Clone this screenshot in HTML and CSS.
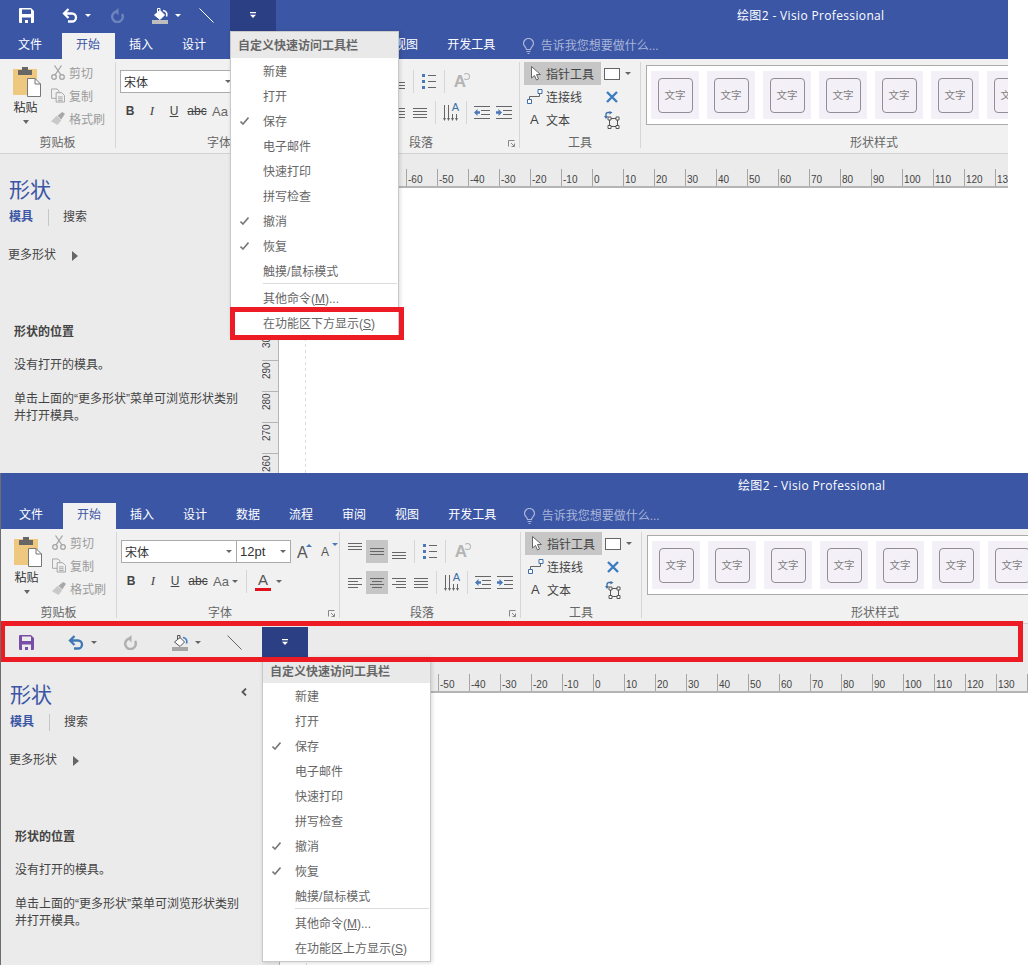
FILE: index.html
```html
<!DOCTYPE html>
<html lang="zh-CN">
<head>
    <meta charset="UTF-8">
    <title>绘图2 - Visio Professional</title>
    <link rel="stylesheet" href="styles.css">
</head>
<body>
    <svg class="icon-defs" aria-hidden="true">
        <symbol id="i-save" viewBox="0 0 15 15"><path fill="currentColor" fill-rule="evenodd" d="M0 1a1 1 0 0 1 1-1h11l3 3v11a1 1 0 0 1-1 1H1a1 1 0 0 1-1-1zM3 1.500V6h9V1.500zM3 9.500V15h3v-3h3v3h3V9.500z"/></symbol>
        <symbol id="i-undo" viewBox="0 0 16 15"><path fill="none" stroke="currentColor" stroke-width="2.300" d="M2 5.500h8a4 4 0 0 1 0 8H6M6.500 1L2 5.500 6.500 10"/></symbol>
        <symbol id="i-redo" viewBox="0 0 14 15"><path fill="none" stroke="currentColor" stroke-width="2.500" d="M7 3.500A5.300 5.300 0 1 0 12 6"/><path fill="currentColor" d="M8.500 0v7.500L4.500 3.500z"/></symbol>
        <symbol id="i-fill" viewBox="0 0 16 16"><path fill="currentColor" d="M0 12h16v4H0z"/><path fill="#fff" stroke="var(--bucket-line)" d="M2.500 7L8 2.500 12.500 7 8 11.500z"/><path fill="none" stroke="var(--bucket-line)" d="M5.500 4.500V.5h2.500v3"/><path fill="none" stroke="var(--bucket-drop)" stroke-width="1.600" d="M11 2.500c3 .5 4.500 2.500 3.500 6"/></symbol>
        <symbol id="i-line" viewBox="0 0 15 15"><path fill="none" stroke="currentColor" d="M.5.5l14 14"/></symbol>
        <symbol id="i-more" viewBox="0 0 7 8"><path fill="currentColor" d="M0 0h7v1.300H0zM0 3h7L3.500 7z"/></symbol>
        <symbol id="i-paste" viewBox="0 0 28 30"><path fill="#edc87e" d="M0 2h24v26H0z"/><path fill="#666" d="M5 3h4V0h6v3h4v5H5z"/><path fill="#fff" stroke="#777" d="M14.500 11.500h7.500l5.500 5.500v12.500h-13z"/><path fill="none" stroke="#777" d="M22 11.500V17h5.500"/></symbol>
        <symbol id="i-cut" viewBox="0 0 14 15"><g fill="none" stroke="#a3a3a3" stroke-width="1.300"><circle cx="3" cy="12" r="2.300"/><circle cx="11" cy="12" r="2.300"/><path d="M4 10L10.500.5M10 10L3.500.5"/></g></symbol>
        <symbol id="i-copy" viewBox="0 0 15 15"><g fill="#f1f1f1" stroke="#a3a3a3"><path d="M.5.5h6l2 2v8h-8z"/><path d="M5.500 4.500h6l3 3v7h-9z"/><path d="M7.500 9h5M7.500 11h5M7.500 13h5"/></g></symbol>
        <symbol id="i-brush" viewBox="0 0 15 14"><path fill="#c9c9c9" d="M0 10l6-6 5 5-4 5z"/><path fill="#a8a8a8" d="M7 4l5-4 3 2-4 6z"/></symbol>
        <symbol id="i-top" viewBox="0 0 14 7"><path fill="none" stroke="#666" d="M0 .5h14M0 3.500h14M0 6.500h14"/></symbol>
        <symbol id="i-left" viewBox="0 0 14 10"><path fill="none" stroke="#666" d="M0 .5h14M0 3.500h10M0 6.500h14M0 9.500h10"/></symbol>
        <symbol id="i-center" viewBox="0 0 14 10"><path fill="none" stroke="#666" d="M0 .5h14M2 3.500h10M0 6.500h14M2 9.500h10"/></symbol>
        <symbol id="i-right" viewBox="0 0 14 10"><path fill="none" stroke="#666" d="M0 .5h14M4 3.500h10M0 6.500h14M4 9.500h10"/></symbol>
        <symbol id="i-justify" viewBox="0 0 14 10"><path fill="none" stroke="#666" d="M0 .5h14M0 3.500h14M0 6.500h14M0 9.500h14"/></symbol>
        <symbol id="i-bullets" viewBox="0 0 14 15"><path fill="#4a7ab5" d="M0 0h3v3H0zM0 6h3v3H0zM0 12h3v3H0z"/><path fill="none" stroke="#666" d="M6 1.500h8M6 7.500h8M6 13.500h8"/></symbol>
        <symbol id="i-textdir" viewBox="0 0 16 17"><path fill="none" stroke="#666" d="M1.500 1v14M5.500 1v14M9.500 10v5M13.500 10v5"/><path fill="#666" d="M0 14h3l-1.500 3zM4 14h3l-1.500 3zM8 14h3l-1.500 3zM12 14h3l-1.500 3z"/></symbol>
        <symbol id="i-outdent" viewBox="0 0 16 13"><path fill="none" stroke="#666" d="M0 .5h16M7 4.500h9M7 8.500h9M0 12.500h16"/><path fill="#4a7ab5" d="M0 6.500l3.500-3.500v2.300H6v2.400H3.500V10z"/></symbol>
        <symbol id="i-indent" viewBox="0 0 16 13"><path fill="none" stroke="#666" d="M0 .5h16M7 4.500h9M7 8.500h9M0 12.500h16"/><path fill="#4a7ab5" d="M6 6.500L2.500 3v2.300H0v2.400h2.500V10z"/></symbol>
        <symbol id="i-pointer" viewBox="0 0 10 15"><path fill="#fff" stroke="#666" d="M.5.5v11.500l3-2.500 2 4.500 2-1-2-4.500h4z"/></symbol>
        <symbol id="i-connector" viewBox="0 0 16 15"><path fill="none" stroke="#666" d="M2.500 10V7.500h10V4"/><path fill="#fff" stroke="#3d6fa8" d="M.5 10.500h4v4h-4zM11 .5h4v4h-4z"/></symbol>
        <symbol id="i-close" viewBox="0 0 12 12"><path fill="none" stroke="#3d7cc0" stroke-width="2.400" d="M1 1l10 10M11 1L1 11"/></symbol>
        <symbol id="i-transform" viewBox="0 0 16 18"><path fill="none" stroke="#555" d="M5.500 7.500h8v8h-8z"/><path fill="#fff" stroke="#555" d="M4 6h3v3H4zM12 6h3v3h-3zM4 14.500h3v3H4zM12 14.500h3v3h-3z"/><path fill="none" stroke="#3d6fa8" stroke-width="1.400" d="M2 5V3.500a2 2 0 0 1 2-2h2"/><path fill="#3d6fa8" d="M0 5h4L2 8zM5.500 0v3.500L8.500 1.500z"/></symbol>
        <symbol id="i-launcher" viewBox="0 0 7 7"><path fill="none" stroke="#888" d="M.5 6.500V.5h6M3 3l3.500 3.500M3.500 6.500h3v-3"/></symbol>
        <symbol id="i-bulb" viewBox="0 0 11 16"><path fill="none" stroke="#a9b5d8" stroke-width="1.200" d="M3.500 11.500c0-2-3-3.500-3-6a5 5 0 0 1 10 0c0 2.500-3 4-3 6zM3.500 13.500h4M4.500 15.500h2"/></symbol>
        <symbol id="i-check" viewBox="0 0 9 8"><path fill="none" stroke="#777" stroke-width="1.600" d="M.5 4.500l2.500 2.500 5.500-6.500"/></symbol>
        <symbol id="i-chevron" viewBox="0 0 6 8"><path fill="none" stroke="#555" stroke-width="1.800" d="M5 .5L1.500 4 5 7.500"/></symbol>
    </svg>

    <!-- shot 1: toolbar above the ribbon -->
    <div class="shot shot-top">
        <div class="titlebar">
            <div class="qat">
                <div class="qat-btn"><svg class="qi-save"><use href="#i-save"/></svg></div>
                <div class="qat-btn qat-split"><svg class="qi-undo"><use href="#i-undo"/></svg><span class="caret"></span></div>
                <div class="qat-btn"><svg class="qi-redo"><use href="#i-redo"/></svg></div>
                <div class="qat-btn qat-split"><svg class="qi-fill"><use href="#i-fill"/></svg><span class="caret"></span></div>
                <div class="qat-btn"><svg class="qi-line"><use href="#i-line"/></svg></div>
                <div class="qat-more"><svg class="qi-more"><use href="#i-more"/></svg></div>
            </div>
            <div class="doc-title">绘图2 - Visio Professional</div>
        </div>
        <div class="tabs">
            <div class="tab tab-file">文件</div>
            <div class="tab tab-active">开始</div>
            <div class="tab">插入</div>
            <div class="tab">设计</div>
            <div class="tab">数据</div>
            <div class="tab">流程</div>
            <div class="tab">审阅</div>
            <div class="tab">视图</div>
            <div class="tab">开发工具</div>
            <div class="tell-me"><svg class="bulb"><use href="#i-bulb"/></svg>告诉我您想要做什么...</div>
        </div>
        <div class="ribbon">
            <div class="group group-clip">
                <div class="group-body clip-body">
                    <div class="paste"><svg class="paste-icon"><use href="#i-paste"/></svg><span class="paste-text">粘贴</span><span class="caret"></span></div>
                    <div class="clip-list">
                        <div class="clip-row"><svg class="clip-icon"><use href="#i-cut"/></svg>剪切</div>
                        <div class="clip-row"><svg class="clip-icon"><use href="#i-copy"/></svg>复制</div>
                        <div class="clip-row"><svg class="clip-icon"><use href="#i-brush"/></svg>格式刷</div>
                    </div>
                </div>
                <div class="group-label">剪贴板</div>
            </div>
            <div class="group group-font">
                <div class="group-body font-body">
                    <div class="font-row">
                        <div class="combo combo-name"><span>宋体</span><span class="caret"></span></div>
                        <div class="combo combo-size"><span>12pt</span><span class="caret"></span></div>
                        <div class="size-btn size-grow">A<i class="tri-up"></i></div>
                        <div class="size-btn size-shrink">A<i class="tri-down"></i></div>
                    </div>
                    <div class="font-row font-row-b">
                        <div class="f-btn f-b">B</div>
                        <div class="f-btn f-i">I</div>
                        <div class="f-btn f-u">U</div>
                        <div class="f-btn f-s">abc</div>
                        <div class="f-btn f-aa">Aa<span class="caret"></span></div>
                        <div class="vsep vsep-font"></div>
                        <div class="f-btn f-color"><span class="f-color-a">A</span><span class="caret"></span></div>
                    </div>
                </div>
                <div class="group-label label-launch">字体<svg class="launcher"><use href="#i-launcher"/></svg></div>
            </div>
            <div class="group group-para">
                <div class="group-body para-body">
                    <div class="para-row">
                        <div class="p-btn p-top"><svg class="p-icon"><use href="#i-top"/></svg></div>
                        <div class="p-btn p-on"><svg class="p-icon"><use href="#i-top"/></svg></div>
                        <div class="p-btn p-bottom"><svg class="p-icon"><use href="#i-top"/></svg></div>
                        <div class="vsep"></div>
                        <div class="p-btn"><svg class="p-icon-b"><use href="#i-bullets"/></svg></div>
                        <div class="vsep"></div>
                        <div class="p-btn p-rotate">A<i class="rotate-mark"></i></div>
                    </div>
                    <div class="para-row">
                        <div class="p-btn"><svg class="p-icon-a"><use href="#i-left"/></svg></div>
                        <div class="p-btn p-on"><svg class="p-icon-a"><use href="#i-center"/></svg></div>
                        <div class="p-btn"><svg class="p-icon-a"><use href="#i-right"/></svg></div>
                        <div class="p-btn"><svg class="p-icon-a"><use href="#i-justify"/></svg></div>
                        <div class="vsep"></div>
                        <div class="p-btn p-dir"><svg class="p-icon-d"><use href="#i-textdir"/></svg><span class="p-dir-a">A</span></div>
                        <div class="vsep"></div>
                        <div class="p-btn"><svg class="p-icon-i"><use href="#i-outdent"/></svg></div>
                        <div class="p-btn"><svg class="p-icon-i"><use href="#i-indent"/></svg></div>
                    </div>
                </div>
                <div class="group-label label-launch">段落<svg class="launcher"><use href="#i-launcher"/></svg></div>
            </div>
            <div class="group group-tools">
                <div class="group-body tools-body">
                    <div class="tool tool-on"><svg class="tool-pointer"><use href="#i-pointer"/></svg>指针工具</div>
                    <div class="tool-side"><span class="tool-rect"></span><span class="caret"></span></div>
                    <div class="tool"><svg class="tool-conn"><use href="#i-connector"/></svg>连接线</div>
                    <div class="tool-side"><svg class="tool-x"><use href="#i-close"/></svg></div>
                    <div class="tool"><span class="tool-a">A</span>文本</div>
                    <div class="tool-side"><svg class="tool-tf"><use href="#i-transform"/></svg></div>
                </div>
                <div class="group-label">工具</div>
            </div>
            <div class="group group-gallery">
                <div class="group-body">
                    <div class="gallery">
                        <div class="swatch"><span class="swatch-box">文字</span></div>
                        <div class="swatch"><span class="swatch-box">文字</span></div>
                        <div class="swatch"><span class="swatch-box">文字</span></div>
                        <div class="swatch"><span class="swatch-box">文字</span></div>
                        <div class="swatch"><span class="swatch-box">文字</span></div>
                        <div class="swatch"><span class="swatch-box">文字</span></div>
                        <div class="swatch"><span class="swatch-box">文字</span></div>
                    </div>
                </div>
                <div class="group-label">形状样式</div>
            </div>
        </div>
        <div class="workspace">
            <div class="panel">
                <div class="panel-head"><span class="panel-title">形状</span><svg class="collapse"><use href="#i-chevron"/></svg></div>
                <div class="panel-tabs"><span class="panel-tab-on">模具</span><span class="panel-tab">搜索</span></div>
                <div class="more-shapes">更多形状<span class="tri-right"></span></div>
                <div class="hint-title">形状的位置</div>
                <div class="hint-line">没有打开的模具。</div>
                <div class="hint-text">单击上面的“更多形状”菜单可浏览形状类别并打开模具。</div>
            </div>
            <div class="vruler">
                <span class="vtick"><b>340</b></span><span class="vtick"><b>330</b></span><span class="vtick"><b>320</b></span><span class="vtick"><b>310</b></span><span class="vtick"><b>300</b></span><span class="vtick"><b>290</b></span><span class="vtick"><b>280</b></span><span class="vtick"><b>270</b></span><span class="vtick"><b>260</b></span>
            </div>
            <div class="canvas">
                <div class="hruler">
                    <span class="tick">-90</span><span class="tick">-80</span><span class="tick">-70</span><span class="tick">-60</span><span class="tick">-50</span><span class="tick">-40</span><span class="tick">-30</span><span class="tick">-20</span><span class="tick">-10</span><span class="tick">0</span><span class="tick">10</span><span class="tick">20</span><span class="tick">30</span><span class="tick">40</span><span class="tick">50</span><span class="tick">60</span><span class="tick">70</span><span class="tick">80</span><span class="tick">90</span><span class="tick">100</span><span class="tick">110</span><span class="tick">120</span><span class="tick">130</span><span class="tick">140</span>
                </div>
                <div class="page"></div>
            </div>
        </div>

        <div class="qat-menu">
            <div class="menu-head">自定义快速访问工具栏</div>
            <div class="menu-item">新建</div>
            <div class="menu-item">打开</div>
            <div class="menu-item menu-checked"><svg class="check"><use href="#i-check"/></svg>保存</div>
            <div class="menu-item">电子邮件</div>
            <div class="menu-item">快速打印</div>
            <div class="menu-item">拼写检查</div>
            <div class="menu-item menu-checked"><svg class="check"><use href="#i-check"/></svg>撤消</div>
            <div class="menu-item menu-checked"><svg class="check"><use href="#i-check"/></svg>恢复</div>
            <div class="menu-item">触摸/鼠标模式</div>
            <div class="menu-sep"></div>
            <div class="menu-item">其他命令(<u>M</u>)...</div>
            <div class="menu-item">在功能区下方显示(<u>S</u>)</div>
        </div>
        <div class="mark mark-item"></div>
    </div>

    <!-- shot 2: toolbar below the ribbon -->
    <div class="shot shot-bottom">
        <div class="titlebar">
            <div class="doc-title">绘图2 - Visio Professional</div>
        </div>
        <div class="tabs">
            <div class="tab tab-file">文件</div>
            <div class="tab tab-active">开始</div>
            <div class="tab">插入</div>
            <div class="tab">设计</div>
            <div class="tab">数据</div>
            <div class="tab">流程</div>
            <div class="tab">审阅</div>
            <div class="tab">视图</div>
            <div class="tab">开发工具</div>
            <div class="tell-me"><svg class="bulb"><use href="#i-bulb"/></svg>告诉我您想要做什么...</div>
        </div>
        <div class="ribbon">
            <div class="group group-clip">
                <div class="group-body clip-body">
                    <div class="paste"><svg class="paste-icon"><use href="#i-paste"/></svg><span class="paste-text">粘贴</span><span class="caret"></span></div>
                    <div class="clip-list">
                        <div class="clip-row"><svg class="clip-icon"><use href="#i-cut"/></svg>剪切</div>
                        <div class="clip-row"><svg class="clip-icon"><use href="#i-copy"/></svg>复制</div>
                        <div class="clip-row"><svg class="clip-icon"><use href="#i-brush"/></svg>格式刷</div>
                    </div>
                </div>
                <div class="group-label">剪贴板</div>
            </div>
            <div class="group group-font">
                <div class="group-body font-body">
                    <div class="font-row">
                        <div class="combo combo-name"><span>宋体</span><span class="caret"></span></div>
                        <div class="combo combo-size"><span>12pt</span><span class="caret"></span></div>
                        <div class="size-btn size-grow">A<i class="tri-up"></i></div>
                        <div class="size-btn size-shrink">A<i class="tri-down"></i></div>
                    </div>
                    <div class="font-row font-row-b">
                        <div class="f-btn f-b">B</div>
                        <div class="f-btn f-i">I</div>
                        <div class="f-btn f-u">U</div>
                        <div class="f-btn f-s">abc</div>
                        <div class="f-btn f-aa">Aa<span class="caret"></span></div>
                        <div class="vsep vsep-font"></div>
                        <div class="f-btn f-color"><span class="f-color-a">A</span><span class="caret"></span></div>
                    </div>
                </div>
                <div class="group-label label-launch">字体<svg class="launcher"><use href="#i-launcher"/></svg></div>
            </div>
            <div class="group group-para">
                <div class="group-body para-body">
                    <div class="para-row">
                        <div class="p-btn p-top"><svg class="p-icon"><use href="#i-top"/></svg></div>
                        <div class="p-btn p-on"><svg class="p-icon"><use href="#i-top"/></svg></div>
                        <div class="p-btn p-bottom"><svg class="p-icon"><use href="#i-top"/></svg></div>
                        <div class="vsep"></div>
                        <div class="p-btn"><svg class="p-icon-b"><use href="#i-bullets"/></svg></div>
                        <div class="vsep"></div>
                        <div class="p-btn p-rotate">A<i class="rotate-mark"></i></div>
                    </div>
                    <div class="para-row">
                        <div class="p-btn"><svg class="p-icon-a"><use href="#i-left"/></svg></div>
                        <div class="p-btn p-on"><svg class="p-icon-a"><use href="#i-center"/></svg></div>
                        <div class="p-btn"><svg class="p-icon-a"><use href="#i-right"/></svg></div>
                        <div class="p-btn"><svg class="p-icon-a"><use href="#i-justify"/></svg></div>
                        <div class="vsep"></div>
                        <div class="p-btn p-dir"><svg class="p-icon-d"><use href="#i-textdir"/></svg><span class="p-dir-a">A</span></div>
                        <div class="vsep"></div>
                        <div class="p-btn"><svg class="p-icon-i"><use href="#i-outdent"/></svg></div>
                        <div class="p-btn"><svg class="p-icon-i"><use href="#i-indent"/></svg></div>
                    </div>
                </div>
                <div class="group-label label-launch">段落<svg class="launcher"><use href="#i-launcher"/></svg></div>
            </div>
            <div class="group group-tools">
                <div class="group-body tools-body">
                    <div class="tool tool-on"><svg class="tool-pointer"><use href="#i-pointer"/></svg>指针工具</div>
                    <div class="tool-side"><span class="tool-rect"></span><span class="caret"></span></div>
                    <div class="tool"><svg class="tool-conn"><use href="#i-connector"/></svg>连接线</div>
                    <div class="tool-side"><svg class="tool-x"><use href="#i-close"/></svg></div>
                    <div class="tool"><span class="tool-a">A</span>文本</div>
                    <div class="tool-side"><svg class="tool-tf"><use href="#i-transform"/></svg></div>
                </div>
                <div class="group-label">工具</div>
            </div>
            <div class="group group-gallery">
                <div class="group-body">
                    <div class="gallery">
                        <div class="swatch"><span class="swatch-box">文字</span></div>
                        <div class="swatch"><span class="swatch-box">文字</span></div>
                        <div class="swatch"><span class="swatch-box">文字</span></div>
                        <div class="swatch"><span class="swatch-box">文字</span></div>
                        <div class="swatch"><span class="swatch-box">文字</span></div>
                        <div class="swatch"><span class="swatch-box">文字</span></div>
                        <div class="swatch"><span class="swatch-box">文字</span></div>
                    </div>
                </div>
                <div class="group-label">形状样式</div>
            </div>
        </div>
        <div class="qat-bar">
            <div class="qat">
                <div class="qat-btn"><svg class="qi-save"><use href="#i-save"/></svg></div>
                <div class="qat-btn qat-split"><svg class="qi-undo"><use href="#i-undo"/></svg><span class="caret"></span></div>
                <div class="qat-btn"><svg class="qi-redo"><use href="#i-redo"/></svg></div>
                <div class="qat-btn qat-split"><svg class="qi-fill"><use href="#i-fill"/></svg><span class="caret"></span></div>
                <div class="qat-btn"><svg class="qi-line"><use href="#i-line"/></svg></div>
                <div class="qat-more"><svg class="qi-more"><use href="#i-more"/></svg></div>
            </div>
        </div>
        <div class="workspace">
            <div class="panel">
                <div class="panel-head"><span class="panel-title">形状</span><svg class="collapse"><use href="#i-chevron"/></svg></div>
                <div class="panel-tabs"><span class="panel-tab-on">模具</span><span class="panel-tab">搜索</span></div>
                <div class="more-shapes">更多形状<span class="tri-right"></span></div>
                <div class="hint-title">形状的位置</div>
                <div class="hint-line">没有打开的模具。</div>
                <div class="hint-text">单击上面的“更多形状”菜单可浏览形状类别并打开模具。</div>
            </div>
            <div class="vruler"></div>
            <div class="canvas">
                <div class="hruler">
                    <span class="tick">-90</span><span class="tick">-80</span><span class="tick">-70</span><span class="tick">-60</span><span class="tick">-50</span><span class="tick">-40</span><span class="tick">-30</span><span class="tick">-20</span><span class="tick">-10</span><span class="tick">0</span><span class="tick">10</span><span class="tick">20</span><span class="tick">30</span><span class="tick">40</span><span class="tick">50</span><span class="tick">60</span><span class="tick">70</span><span class="tick">80</span><span class="tick">90</span><span class="tick">100</span><span class="tick">110</span><span class="tick">120</span><span class="tick">130</span><span class="tick">140</span>
                </div>
                <div class="page"></div>
            </div>
        </div>

        <div class="qat-menu">
            <div class="menu-head">自定义快速访问工具栏</div>
            <div class="menu-item">新建</div>
            <div class="menu-item">打开</div>
            <div class="menu-item menu-checked"><svg class="check"><use href="#i-check"/></svg>保存</div>
            <div class="menu-item">电子邮件</div>
            <div class="menu-item">快速打印</div>
            <div class="menu-item">拼写检查</div>
            <div class="menu-item menu-checked"><svg class="check"><use href="#i-check"/></svg>撤消</div>
            <div class="menu-item menu-checked"><svg class="check"><use href="#i-check"/></svg>恢复</div>
            <div class="menu-item">触摸/鼠标模式</div>
            <div class="menu-sep"></div>
            <div class="menu-item">其他命令(<u>M</u>)...</div>
            <div class="menu-item">在功能区上方显示(<u>S</u>)</div>
        </div>
        <div class="mark mark-bar"></div>
    </div>
</body>
</html>
```

FILE: styles.css
```css
* {
    box-sizing: border-box;
}

html, body {
    margin: 0;
    padding: 0;
    background-color: #fff;
}

body {
    width: 1028px;
    height: 965px;
    overflow: hidden;
    font-family: "Liberation Sans", "Noto Sans CJK SC", sans-serif;
    font-size: 12px;
    color: #444;
}

svg {
    display: block;
    flex: none;
}

.icon-defs {
    position: absolute;
    width: 0;
    height: 0;
}

.caret {
    display: block;
    flex: none;
    width: 0;
    height: 0;
    border-left: 3px solid transparent;
    border-right: 3px solid transparent;
    border-top: 3px solid #666;
}

/* the two stacked window captures */
.shot {
    position: relative;
    overflow: hidden;
}

.shot-top {
    width: 1008px;
    height: 473px;
}

.shot-bottom {
    width: 1028px;
    height: 492px;
    border-left: 1px solid #6d6d6d;
}

/* title bar */
.titlebar {
    display: flex;
    background-color: #3b56a5;
    color: #fff;
}

.shot-top .titlebar {
    height: 33px;
}

.shot-bottom .titlebar {
    height: 30px;
}

.doc-title {
    font-family: "Open Sans", "Noto Sans CJK SC", sans-serif;
    font-size: 12px;
    letter-spacing: 0.35px;
    white-space: nowrap;
}

.shot-top .doc-title {
    margin-left: 461px;
    line-height: 32px;
}

.shot-bottom .doc-title {
    margin-left: 737px;
    line-height: 26px;
}

/* quick access toolbar */
.qat {
    display: flex;
    height: 31px;
}

.qat-btn {
    display: flex;
    align-items: center;
    justify-content: center;
    flex: none;
}

.qat-split {
    justify-content: flex-start;
}

.qat-more {
    display: flex;
    align-items: center;
    justify-content: center;
    width: 46px;
    height: 31px;
    background-color: #2b3f84;
}

.shot-top .qat {
    padding-left: 5px;
    color: #fff;
    --bucket-line: #fff;
    --bucket-drop: #fff;
}

.shot-top .qat-btn {
    width: 43px;
}

.shot-top .qat-split {
    width: 47px;
    padding-left: 14px;
    gap: 7px;
}

.shot-top .qat-more {
    margin-left: 2px;
}

.shot-top .qat .caret {
    border-top-color: #fff;
}

.shot-top .qi-redo {
    color: #6d83bd;
}

.shot-top .qi-fill {
    color: #bdbdbd;
}

.shot-bottom .qat-btn {
    width: 50px;
}

.shot-bottom .qat-split {
    width: 54px;
    padding-left: 17px;
    gap: 7px;
}

.shot-bottom .qat-more {
    margin-left: 3px;
}

.qi-save {
    width: 15px;
    height: 15px;
}

.qi-undo {
    width: 16px;
    height: 15px;
}

.qi-redo {
    width: 14px;
    height: 15px;
}

.qi-fill {
    width: 16px;
    height: 16px;
}

.qi-line {
    width: 15px;
    height: 15px;
}

.qi-more {
    width: 6px;
    height: 7px;
    color: #fff;
}

.qat-bar {
    height: 35px;
    padding-top: 3px;
    background-color: #ebebeb;
    --bucket-line: #555;
    --bucket-drop: #3d7cc0;
}

.qat-bar .qi-save {
    color: #7a4ea6;
}

.qat-bar .qi-undo {
    color: #3d78b4;
}

.qat-bar .qi-redo {
    color: #b0b0b0;
}

.qat-bar .qi-fill {
    color: #a6a6a6;
}

.qat-bar .qi-line {
    color: #666;
}

/* ribbon tabs */
.tabs {
    display: flex;
    height: 26px;
    background-color: #3b56a5;
    color: #fff;
    padding-left: 3.500px;
    line-height: 25px;
}

.tab {
    padding: 0 14.500px;
    white-space: nowrap;
}

.tab-file {
    margin-right: 5px;
}

.tab-active {
    background-color: #f1f1f1;
    color: #3b56a5;
}

.tell-me {
    display: flex;
    align-items: center;
    margin-left: 13px;
    color: #a9b5d8;
    white-space: nowrap;
}

.bulb {
    width: 11px;
    height: 16px;
    margin-right: 7px;
}

/* ribbon */
.ribbon {
    display: flex;
    height: 95px;
    padding-top: 3px;
    background-color: #f1f1f1;
    border-bottom: 1px solid #d2d2d2;
    overflow: hidden;
}

.group {
    display: flex;
    flex: none;
    flex-direction: column;
    height: 86px;
    border-right: 1px solid #d6d6d6;
}

.group-body {
    flex: none;
    height: 73px;
}

.group-label {
    position: relative;
    flex: none;
    height: 16px;
    line-height: 16px;
    text-align: center;
    color: #666;
    white-space: nowrap;
}

.label-launch {
    padding-right: 16px;
}

.launcher {
    position: absolute;
    right: 4px;
    top: 5px;
    width: 7px;
    height: 7px;
}

.group-clip {
    width: 116px;
}

.clip-body {
    display: flex;
    padding-left: 13px;
}

.paste {
    display: flex;
    flex-direction: column;
    align-items: center;
    width: 28px;
    padding-top: 5px;
}

.paste-icon {
    width: 28px;
    height: 30px;
}

.paste-text {
    margin: 1px 3px 0 0;
    line-height: 20px;
    color: #333;
}

.paste .caret {
    margin: 2px 2px 0 0;
    border-top-width: 4px;
}

.clip-list {
    margin: -1px 0 0 10px;
    color: #9b9b9b;
}

.clip-row {
    display: flex;
    align-items: center;
    height: 23px;
    white-space: nowrap;
}

.clip-icon {
    width: 14px;
    height: 15px;
    margin-right: 4px;
}

.group-font {
    width: 223px;
}

.font-body {
    padding: 8px 0 0 4px;
}

.font-row {
    display: flex;
    align-items: center;
    height: 23px;
}

.font-row-b {
    height: 22px;
    margin: 7px 0 0 -1px;
}

.combo {
    display: flex;
    align-items: center;
    justify-content: space-between;
    height: 23px;
    padding: 0 4px 0 3px;
    border: 1px solid #ababab;
    background-color: #fff;
    color: #333;
}

.combo-name {
    width: 116px;
}

.combo-size {
    width: 55px;
    margin-left: -1px;
    font-size: 13px;
}

.size-btn {
    position: relative;
    width: 24px;
    padding: 1px 0 0 6px;
    font-size: 16px;
    line-height: 21px;
    color: #555;
}

.size-shrink {
    padding: 2px 0 0 6px;
    font-size: 12px;
}

.tri-up, .tri-down {
    position: absolute;
    top: 3px;
    width: 0;
    height: 0;
    border-left: 3px solid transparent;
    border-right: 3px solid transparent;
}

.tri-up {
    right: 3px;
    border-bottom: 3px solid #4a7ab5;
}

.tri-down {
    right: 1px;
    border-top: 3px solid #4a7ab5;
}

.f-btn {
    display: flex;
    align-items: center;
    justify-content: center;
    flex: none;
    width: 22px;
    height: 22px;
    color: #444;
}

.f-b {
    font-weight: bold;
}

.f-i {
    font-style: italic;
    font-family: "Liberation Serif", serif;
    font-size: 13px;
}

.f-u {
    text-decoration: underline;
}

.f-s {
    width: 24px;
    text-decoration: line-through;
}

.f-aa {
    width: 32px;
    justify-content: flex-start;
    padding-left: 3px;
    gap: 3px;
    font-size: 13px;
    color: #666;
}

.vsep {
    flex: none;
    width: 1px;
    height: 23px;
    margin: 0 4px;
    background-color: #d6d6d6;
}

.f-color {
    width: 36px;
    justify-content: flex-start;
    padding-left: 4px;
    gap: 5px;
}

.f-color-a {
    display: block;
    width: 16px;
    text-align: center;
    font-size: 15px;
    line-height: 16px;
    border-bottom: 3px solid #e0121b;
    color: #555;
}

.group-para {
    width: 181px;
}

.para-body {
    padding: 8px 0 0 4px;
}

.para-row {
    display: flex;
    height: 23px;
    margin-bottom: 8px;
}

.p-btn {
    position: relative;
    display: flex;
    align-items: center;
    justify-content: center;
    flex: none;
    width: 22px;
    height: 23px;
}

.p-on {
    background-color: #c6c6c6;
}

.p-icon {
    width: 14px;
    height: 7px;
}

.p-icon-a {
    width: 14px;
    height: 10px;
}

.p-top {
    align-items: flex-start;
    padding-top: 3px;
}

.p-bottom {
    align-items: flex-end;
    padding-bottom: 4px;
}

.p-icon-b {
    width: 14px;
    height: 15px;
}

.p-icon-d {
    width: 16px;
    height: 17px;
}

.p-dir-a {
    position: absolute;
    top: 1px;
    right: 3px;
    font-size: 11px;
    line-height: 11px;
    color: #3d6fa8;
}

.p-icon-i {
    width: 16px;
    height: 13px;
}

.p-rotate {
    font-size: 17px;
    font-weight: bold;
    color: #b4b4b4;
}

.rotate-mark {
    position: absolute;
    top: 3px;
    right: 1px;
    width: 7px;
    height: 7px;
    border: 1px solid #b4b4b4;
    border-left-color: transparent;
    border-radius: 50%;
}

.group-tools {
    width: 121px;
}

.tools-body {
    display: grid;
    grid-template-columns: 77px 39px;
    grid-auto-rows: 23px;
    padding-left: 4px;
}

.tool {
    display: flex;
    align-items: center;
    padding-left: 22px;
    position: relative;
    white-space: nowrap;
}

.tool svg, .tool-a {
    position: absolute;
    left: 3px;
}

.tool-on {
    background-color: #c6c6c6;
}

.tool .tool-pointer {
    left: 7px;
    width: 10px;
    height: 15px;
}

.tool-conn {
    width: 16px;
    height: 15px;
}

.tool .tool-a {
    left: 6px;
    font-size: 13px;
}

.tool-side {
    display: flex;
    align-items: center;
    gap: 5px;
    padding-left: 3px;
}

.tool-rect {
    display: block;
    width: 16px;
    height: 12px;
    border: 1px solid #666;
    background-color: #fff;
}

.tool-x {
    width: 12px;
    height: 12px;
    margin-left: 2px;
}

.tool-tf {
    width: 16px;
    height: 18px;
}

.group-gallery {
    width: 466px;
    border-right: 0;
}

.gallery {
    display: flex;
    gap: 8px;
    width: 467px;
    height: 60px;
    margin: 3px 0 0 5px;
    padding: 5px 4px;
    border: 1px solid #ababab;
    background-color: #fff;
}

.swatch {
    display: flex;
    align-items: center;
    justify-content: center;
    flex: none;
    width: 48px;
    height: 48px;
    background-color: #f4f0f7;
}

.swatch-box {
    display: flex;
    align-items: center;
    justify-content: center;
    width: 35px;
    height: 35px;
    padding-bottom: 1px;
    border: 1px solid #918c98;
    border-radius: 4px;
    font-size: 10.500px;
    color: #808080;
}

/* shapes panel and rulers */
.workspace {
    display: flex;
    background-color: #ebebeb;
}

.shot-top .workspace {
    height: 319px;
}

.shot-bottom .workspace {
    height: 306px;
}

.panel {
    flex: none;
    width: 262px;
    padding: 21px 0 0 9px;
}

.panel-head {
    display: flex;
    align-items: center;
    justify-content: space-between;
    height: 30px;
    padding-right: 16px;
}

.panel-title {
    font-size: 21px;
    line-height: 30px;
    color: #3b56a5;
}

.collapse {
    width: 6px;
    height: 8px;
    margin-top: -6px;
}

.panel-tabs {
    display: flex;
    height: 17px;
    margin-top: 4px;
    line-height: 17px;
}

.panel-tab-on {
    padding-right: 15px;
    border-right: 1px solid #c6c6c6;
    color: #3b56a5;
    font-weight: bold;
}

.panel-tab {
    padding-left: 14px;
}

.more-shapes {
    display: flex;
    align-items: center;
    margin: 21px 0 0 -1px;
    height: 17px;
    line-height: 17px;
}

.tri-right {
    width: 0;
    height: 0;
    margin-left: 16px;
    border-top: 5px solid transparent;
    border-bottom: 5px solid transparent;
    border-left: 6px solid #666;
}

.hint-title {
    margin: 60px 0 0 5px;
    font-weight: bold;
    line-height: 17px;
}

.hint-line {
    margin: 16px 0 0 5px;
    line-height: 17px;
}

.hint-text {
    width: 232px;
    margin: 17px 0 0 5px;
    line-height: 17px;
}

.vruler {
    flex: none;
    width: 17px;
    padding-top: 33px;
    border-right: 1px solid #b4b4b4;
    overflow: hidden;
}

.shot-bottom .vruler {
    padding-top: 0;
}

.vtick {
    display: block;
    height: 31px;
    border-top: 1px solid #b4b4b4;
    font-size: 10px;
}

.vtick:first-child {
    margin-top: 18px;
}

.vtick b {
    display: block;
    width: 14px;
    height: 17px;
    margin-top: 1px;
    padding-left: 1px;
    font-weight: normal;
    line-height: 10px;
    writing-mode: vertical-rl;
    transform: rotate(180deg);
}

.canvas {
    display: flex;
    flex: 1;
    flex-direction: column;
    min-width: 0;
}

.hruler {
    display: flex;
    align-items: flex-end;
    height: 34px;
    padding-left: 34px;
    border-bottom: 2px solid #b4b4b4;
    overflow: hidden;
}

.tick {
    flex: none;
    width: 31px;
    height: 17px;
    padding-left: 1px;
    border-left: 1px solid #a5a5a5;
    font-size: 10px;
    line-height: 21px;
    color: #444;
}

.page {
    flex: 1;
    background-color: #fff;
    background-image: linear-gradient(#ddd 50%, transparent 50%);
    background-size: 1px 6px;
    background-position: 26px 0;
    background-repeat: repeat-y;
}

/* customize menu, over the window */
.qat-menu {
    position: absolute;
    width: 169px;
    padding-bottom: 1px;
    border: 1px solid #c8c8c8;
    background-color: #fff;
    color: #666;
    box-shadow: 1px 1px 4px rgba(0, 0, 0, 0.15);
}

.shot-top .qat-menu {
    left: 230px;
    top: 31px;
}

.shot-bottom .qat-menu {
    left: 261px;
    top: 184px;
}

.menu-head {
    height: 26px;
    padding-left: 7px;
    line-height: 28px;
    font-weight: bold;
    background-color: #e9e9e9;
}

.shot-bottom .menu-head {
    height: 25px;
}

.menu-item {
    position: relative;
    height: 25px;
    padding: 2px 0 0 32px;
    line-height: 25px;
    white-space: nowrap;
}

.check {
    position: absolute;
    left: 9px;
    top: 9px;
    width: 9px;
    height: 8px;
}

.menu-sep {
    height: 1px;
    margin: 0 1px 1px 32px;
    background-color: #dcdcdc;
}

/* red call-out boxes */
.mark {
    position: absolute;
    border: 5px solid #ed1c24;
}

.mark-item {
    left: 230px;
    top: 307px;
    width: 174px;
    height: 33px;
}

.mark-bar {
    left: -1px;
    top: 148px;
    width: 1023px;
    height: 41px;
}
```
